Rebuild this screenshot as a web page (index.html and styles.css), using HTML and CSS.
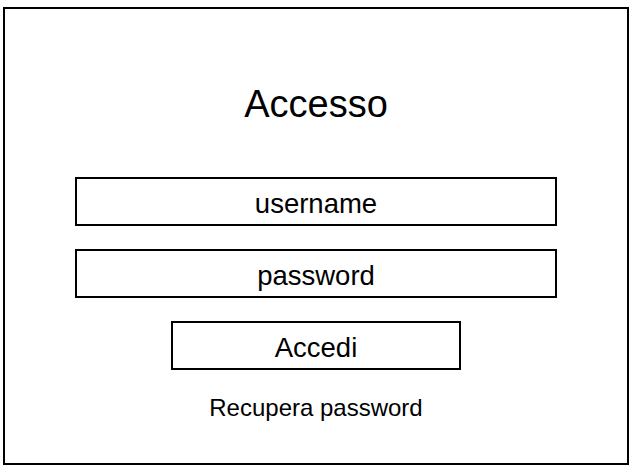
FILE: index.html
```html
<!doctype html>
<html lang="it">
<head>
  <meta charset="UTF-8">
  <meta name="viewport" content="width=device-width, initial-scale=1.0">
  <title>Accesso</title>
  <link rel="stylesheet" href="styles.css">
</head>
<body>
  <div class="frame">
    <h1 class="title">Accesso</h1>
    <div class="field field-first">username</div>
    <div class="field">password</div>
    <div class="field button">Accedi</div>
    <p class="recover">Recupera password</p>
  </div>
</body>
</html>
```

FILE: styles.css
```css
* {
  margin: 0;
  padding: 0;
  box-sizing: border-box;
  font-family: 'Liberation Sans', Arial, sans-serif;
}
body {
  background: #fff;
  color: #000;
  padding: 7px 5px 7px 3px;
}
.frame {
  width: 626px;
  height: 458px;
  border: 2px solid #000;
  display: flex;
  flex-direction: column;
  align-items: center;
  padding-top: 76px;
}
.title {
  font-size: 38px;
  font-weight: normal;
  line-height: 38px;
}
.field {
  width: 482px;
  height: 49px;
  border: 2px solid #000;
  margin-top: 23px;
  padding-top: 4px;
  text-align: center;
  font-size: 27.5px;
  line-height: 41px;
}
.field-first {
  margin-top: 54px;
}
.button {
  width: 290px;
}
.recover {
  margin-top: 26px;
  font-size: 24px;
  line-height: 24px;
}
```
